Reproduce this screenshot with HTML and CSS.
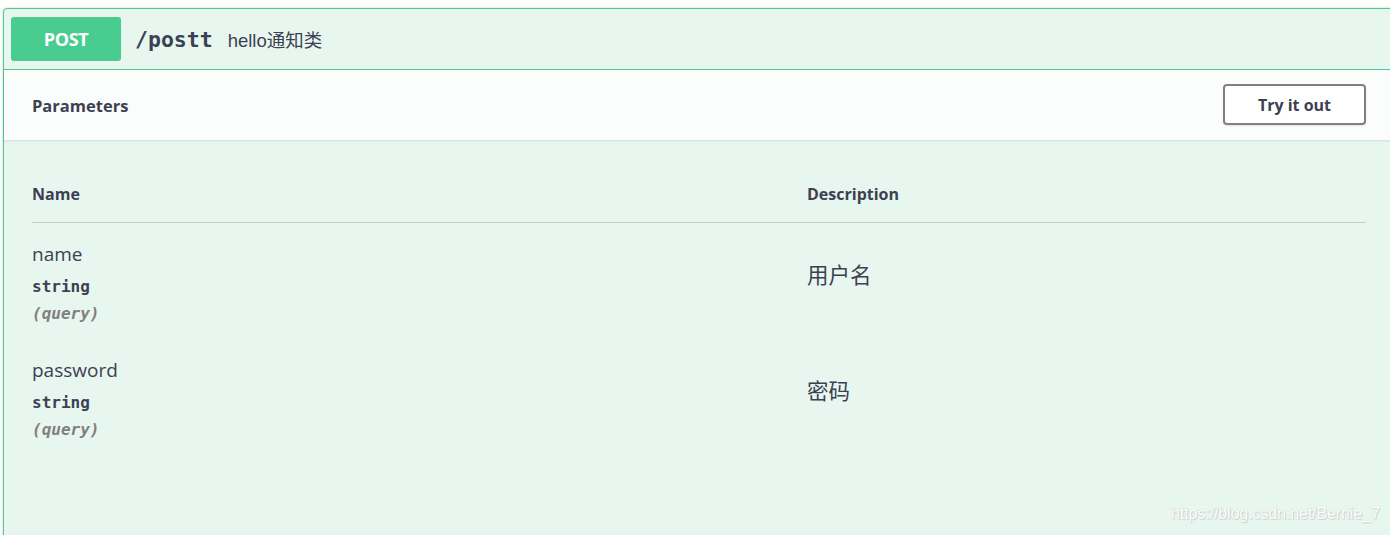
FILE: index.html
```html
<!DOCTYPE html>
<html lang="zh">
<head>
<meta charset="utf-8">
<title>POST /postt</title>
<link rel="stylesheet" href="styles.css">
</head>
<body>
<div class="page">
  <div class="opblock">
    <div class="summary">
      <span class="method">POST</span>
      <span class="path">/postt</span>
      <span class="summary-desc">hello通知类</span>
    </div>
    <div class="section-header">
      <h4 class="section-title">Parameters</h4>
      <button class="try-out">Try it out</button>
    </div>
    <div class="table-container">
      <div class="params">
        <div class="th">Name</div>
        <div class="th">Description</div>

        <div class="td col-name">
          <div class="param-name">name</div>
          <div class="param-type">string</div>
          <div class="param-in">(query)</div>
        </div>
        <div class="td col-desc">用户名</div>

        <div class="td col-name">
          <div class="param-name">password</div>
          <div class="param-type">string</div>
          <div class="param-in">(query)</div>
        </div>
        <div class="td col-desc">密码</div>
      </div>
    </div>
  </div>
  <div class="watermark">https://blog.csdn.net/Bernie_7</div>
</div>
</body>
</html>
```

FILE: styles.css
```css
html, body {
  margin: 0;
  padding: 0;
  background: #ffffff;
}

body {
  font-family: "Open Sans", "Noto Sans CJK SC", sans-serif;
  color: #3b4151;
}

.page {
  position: relative;
  width: 1390px;
  height: 535px;
  overflow: hidden;
  padding: 8px 0 0 3px;
  box-sizing: border-box;
}

.opblock {
  width: 1400px;
  height: 600px;
  box-sizing: border-box;
  border: 1px solid #49cc90;
  border-radius: 4px;
  background: #e8f6f0;
  box-shadow: 0 0 3px rgba(0, 0, 0, 0.19);
}

.summary {
  display: flex;
  align-items: center;
  height: 60px;
  padding: 0 7px;
  border-bottom: 1px solid #49cc90;
}

.method {
  display: flex;
  align-items: center;
  justify-content: center;
  width: 110px;
  height: 44px;
  border-radius: 3px;
  background: #49cc90;
  color: #ffffff;
  font-family: "Open Sans", sans-serif;
  font-weight: 700;
  font-size: 18px;
  letter-spacing: -0.4px;
}

.path {
  margin-left: 14px;
  font-family: "DejaVu Sans Mono", monospace;
  font-weight: 700;
  font-size: 21.5px;
  color: #3b4151;
}

.summary-desc {
  margin-left: 15px;
  font-family: "Liberation Sans", "Noto Sans CJK SC", sans-serif;
  font-size: 18.5px;
  color: #3b4151;
}

.section-header {
  display: flex;
  align-items: center;
  justify-content: space-between;
  height: 70px;
  padding: 0 36px 0 28px;
  background: rgba(255, 255, 255, 0.8);
  box-shadow: 0 1px 2px rgba(0, 0, 0, 0.1);
}

.section-title {
  margin: 0;
  font-size: 16.5px;
  font-weight: 700;
  color: #3b4151;
}

.try-out {
  width: 143px;
  height: 41px;
  margin-top: -1px;
  border: 2px solid #808080;
  border-radius: 4px;
  background: #ffffff;
  box-shadow: 0 1px 2px rgba(0, 0, 0, 0.1);
  font-family: "Open Sans", sans-serif;
  font-weight: 700;
  font-size: 16px;
  color: #3b4151;
  padding: 0;
}

.table-container {
  padding: 0 36px 0 28px;
}

.params {
  display: grid;
  grid-template-columns: 775px 1fr;
}

.th {
  padding: 43px 0 17px;
  line-height: 22px;
  font-size: 16px;
  font-weight: 700;
  color: #3b4151;
  border-bottom: 1px solid #c3cfcf;
}

.td.col-name {
  padding: 19px 0 16px;
}

.param-name {
  font-size: 19px;
  line-height: 24px;
  font-weight: 400;
  color: #3b4151;
}

.param-type {
  margin-top: 12px;
  font-family: "DejaVu Sans Mono", monospace;
  font-weight: 700;
  font-size: 16px;
  line-height: 18px;
  color: #3b4151;
}

.param-in {
  margin-top: 9px;
  font-family: "DejaVu Sans Mono", monospace;
  font-style: italic;
  font-weight: 700;
  font-size: 16px;
  line-height: 18px;
  color: #808080;
}

.td.col-desc {
  padding-top: 38px;
  font-family: "Noto Sans CJK SC", sans-serif;
  font-size: 21.5px;
  line-height: 26px;
  color: #3b4151;
}

.watermark {
  position: absolute;
  left: 1171px;
  top: 505px;
  font-family: "Liberation Sans", sans-serif;
  font-size: 16px;
  color: #ffffff;
  text-shadow: 0 0 1px #b8c4c0, 1px 1px 1px #c8d2ce;
  letter-spacing: -0.1px;
}
```
